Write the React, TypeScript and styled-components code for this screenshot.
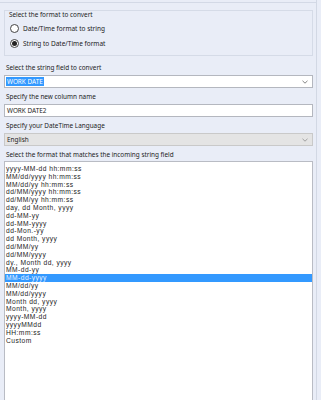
import React from "react";
import styled, { createGlobalStyle } from "styled-components";

const GlobalStyle = createGlobalStyle`
  html, body { margin: 0; padding: 0; background: #e9edf7; }
  body { font-family: "Noto Sans", "Open Sans", sans-serif; color: #1c1c1c; }
  * { box-sizing: border-box; }
`;

const Frame = styled.div`
  width: 317px;
  height: 400px;
  overflow: hidden;
  padding: 0 3px 0 4px;
  border-right: 1px solid #d2d8e4;
  display: flex;
  flex-direction: column;
  font-size: 6.4px;
`;

const TopRule = styled.div`
  height: 1px;
  margin: 2px -4px 0 -4px;
  background: #d3d9e6;
`;

const GroupBox = styled.div`
  margin-top: 7px;
  height: 46px;
  border: 1px solid #d5dbe7;
  padding: 0 4px;
  display: flex;
  flex-direction: column;
`;

const GroupTitle = styled.div`
  line-height: 8px;
  height: 8px;
  white-space: nowrap;
`;

const RadioRow = styled.label<{ $first?: boolean }>`
  display: flex;
  align-items: center;
  height: 15px;
  margin-top: ${(p) => (p.$first ? "2px" : "0")};
  gap: 4px;
  white-space: nowrap;
  font-size: 6.5px;
`;

const RadioDot = styled.span<{ $checked?: boolean }>`
  width: 9px;
  height: 9px;
  border-radius: 50%;
  border: 1px solid #444;
  background: #fff;
  display: flex;
  align-items: center;
  justify-content: center;
  margin-left: 1px;
  &::after {
    content: "";
    width: 5px;
    height: 5px;
    border-radius: 50%;
    background: ${(p) => (p.$checked ? "#222" : "transparent")};
  }
`;

const FieldLabel = styled.div<{ $mt: number }>`
  margin-top: ${(p) => p.$mt}px;
  padding-left: 2px;
  line-height: 8px;
  height: 8px;
  white-space: nowrap;
`;

const Combo = styled.div<{ $disabled?: boolean }>`
  margin-top: 3px;
  height: 13px;
  border: 1px solid ${(p) => (p.$disabled ? "#c9c9c9" : "#b4b7bf")};
  background: ${(p) => (p.$disabled ? "#e4e4e4" : "#fff")};
  display: flex;
  align-items: center;
  padding: 0 4px 0 1px;
  justify-content: space-between;
`;

const ComboText = styled.span<{ $selected?: boolean }>`
  line-height: 9px;
  padding: 0 1px;
  background: ${(p) => (p.$selected ? "#3399ff" : "transparent")};
  color: ${(p) => (p.$selected ? "#fff" : "#1c1c1c")};
  white-space: nowrap;
`;

const TextBox = styled.div`
  margin-top: 3px;
  height: 13px;
  border: 1px solid #b4b7bf;
  background: #fff;
  display: flex;
  align-items: center;
  padding: 0 2px;
  white-space: nowrap;
`;

const ListBox = styled.div`
  margin-top: 2px;
  flex: 1;
  border: 1px solid #b9bcc4;
  border-bottom: none;
  background: #fff;
  padding-top: 3px;
  display: flex;
  flex-direction: column;
  font-family: "Liberation Sans", Arial, sans-serif;
  font-size: 6.7px;
  letter-spacing: 0.45px;
`;

const ListItem = styled.div<{ $selected?: boolean }>`
  height: 7.8px;
  line-height: 7.8px;
  padding-left: 1px;
  white-space: nowrap;
  background: ${(p) => (p.$selected ? "#3399ff" : "transparent")};
  color: ${(p) => (p.$selected ? "#e8f2ff" : "#1c1c1c")};
`;

const Chevron = ({ color }: { color: string }) => (
  <svg width="6" height="4" viewBox="0 0 6 4">
    <path d="M0.5 0.8 L3 3.2 L5.5 0.8" fill="none" stroke={color} strokeWidth="0.9" />
  </svg>
);

const formats = [
  "yyyy-MM-dd hh:mm:ss",
  "MM/dd/yyyy hh:mm:ss",
  "MM/dd/yy hh:mm:ss",
  "dd/MM/yyyy hh:mm:ss",
  "dd/MM/yy hh:mm:ss",
  "day, dd Month, yyyy",
  "dd-MM-yy",
  "dd-MM-yyyy",
  "dd-Mon.-yy",
  "dd Month, yyyy",
  "dd/MM/yy",
  "dd/MM/yyyy",
  "dy., Month dd, yyyy",
  "MM-dd-yy",
  "MM-dd-yyyy",
  "MM/dd/yy",
  "MM/dd/yyyy",
  "Month dd, yyyy",
  "Month, yyyy",
  "yyyy-MM-dd",
  "yyyyMMdd",
  "HH:mm:ss",
  "Custom",
];

export default function App() {
  return (
    <>
      <GlobalStyle />
      <Frame>
        <TopRule />
        <GroupBox>
          <GroupTitle>Select the format to convert</GroupTitle>
          <RadioRow $first>
            <RadioDot />
            Date/Time format to string
          </RadioRow>
          <RadioRow>
            <RadioDot $checked />
            String to Date/Time format
          </RadioRow>
        </GroupBox>
        <FieldLabel $mt={8}>Select the string field to convert</FieldLabel>
        <Combo>
          <ComboText $selected>WORK DATE</ComboText>
          <Chevron color="#777" />
        </Combo>
        <FieldLabel $mt={5}>Specify the new column name</FieldLabel>
        <TextBox>WORK DATE2</TextBox>
        <FieldLabel $mt={5}>Specify your DateTime Language</FieldLabel>
        <Combo $disabled>
          <ComboText>English</ComboText>
          <Chevron color="#999" />
        </Combo>
        <FieldLabel $mt={5}>Select the format that matches the incoming string field</FieldLabel>
        <ListBox>
          {formats.map((f, i) => (
            <ListItem key={f} $selected={i === 14}>
              {f}
            </ListItem>
          ))}
        </ListBox>
      </Frame>
    </>
  );
}
